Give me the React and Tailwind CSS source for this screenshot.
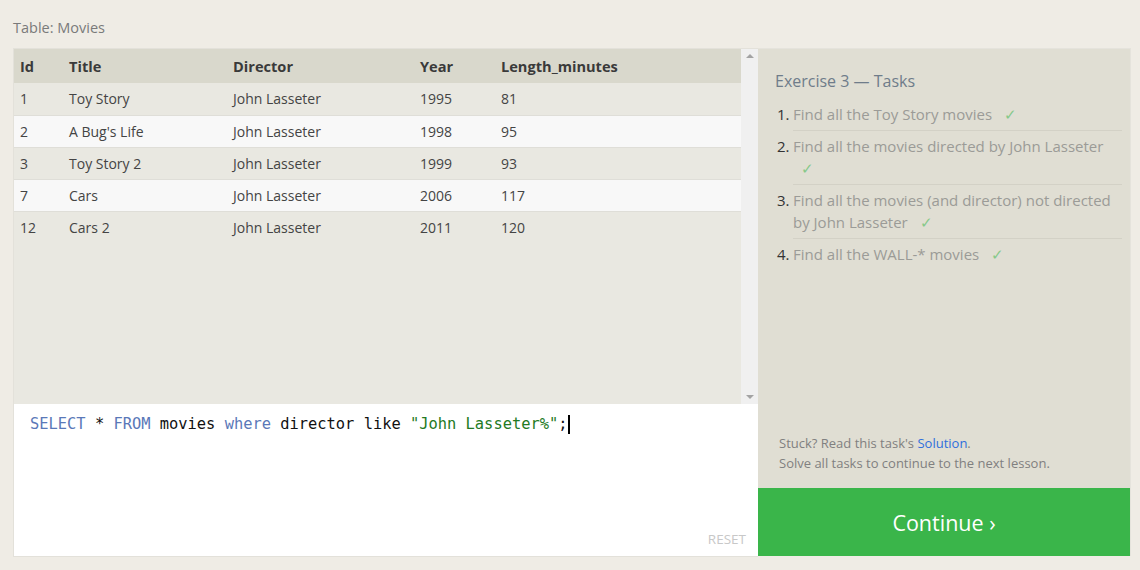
import React from "react";

const rows = [
  ["1", "Toy Story", "John Lasseter", "1995", "81"],
  ["2", "A Bug's Life", "John Lasseter", "1998", "95"],
  ["3", "Toy Story 2", "John Lasseter", "1999", "93"],
  ["7", "Cars", "John Lasseter", "2006", "117"],
  ["12", "Cars 2", "John Lasseter", "2011", "120"],
];

const Check = () => <span className="ml-3 leading-[20px] text-[#86c98a]">✓</span>;

export default function App() {
  return (
    <div
      className="w-[1140px] h-[570px] bg-[#efece5] pl-[13px] pt-[17px] text-[#444]"
      style={{ fontFamily: '"Open Sans", "Noto Sans", sans-serif' }}
    >
      <div className="text-[14.5px] leading-[22px] text-[#7a7a7a] h-[31px]">Table: Movies</div>
      <div className="flex w-[1118px]">
        {/* left */}
        <div className="w-[745px] flex flex-col border border-b-0 border-[#e3e1da] border-r-0">
          <div className="flex h-[355px] bg-[#e9e8e1]">
            <div className="flex-1">
              <table className="w-full text-[14px] border-collapse">
                <thead>
                  <tr className="bg-[#d9d8cc] h-[34px] text-left text-[14.6px] text-[#3a3a3a]">
                    <th className="pl-[6px] pt-[2px] w-[55px] font-bold">Id</th>
                    <th className="w-[164px] pt-[2px] font-bold">Title</th>
                    <th className="w-[187px] pt-[2px] font-bold">Director</th>
                    <th className="w-[81px] pt-[2px] font-bold">Year</th>
                    <th className="pt-[2px] font-bold">Length_minutes</th>
                  </tr>
                </thead>
                <tbody>
                  {rows.map((r, i) => (
                    <tr
                      key={i}
                      className={
                        (i % 2 === 1 ? "bg-[#f8f8f8]" : "bg-[#e9e8e1]") +
                        (i < rows.length - 1 ? " h-[32px] border-b border-[#dfded8]" : " h-[32px]")
                      }
                    >
                      <td className="pl-[6px]">{r[0]}</td>
                      <td>{r[1]}</td>
                      <td>{r[2]}</td>
                      <td>{r[3]}</td>
                      <td>{r[4]}</td>
                    </tr>
                  ))}
                </tbody>
              </table>
            </div>
            <div className="w-[17px] bg-[#f0f0f0] flex flex-col justify-between items-center py-[5px]">
              <div className="w-0 h-0 border-l-[4px] border-r-[4px] border-b-[4px] border-l-transparent border-r-transparent border-b-[#a3a3a3]" />
              <div className="w-0 h-0 border-l-[4px] border-r-[4px] border-t-[4px] border-l-transparent border-r-transparent border-t-[#a3a3a3]" />
            </div>
          </div>
          <div className="h-[153px] bg-white flex flex-col justify-between pl-[16px] pr-[12px] pt-[9px] pb-[8px] border-b border-[#e3e1da]">
            <div
              className="text-[15.4px] leading-[22px] text-[#111] flex items-center"
              style={{ fontFamily: '"DejaVu Sans Mono", monospace' }}
            >
              <span className="text-[#5a78b8]">SELECT</span>
              <span className="whitespace-pre"> * </span>
              <span className="text-[#5a78b8]">FROM</span>
              <span className="whitespace-pre"> movies </span>
              <span className="text-[#5a78b8]">where</span>
              <span className="whitespace-pre"> director like </span>
              <span className="text-[#237a23]">"John Lasseter%"</span>
              <span>;</span>
              <span className="inline-block w-[2px] h-[19px] bg-black" />
            </div>
            <div className="self-end text-[13.5px] leading-[18px] text-[#c8c8c8]">RESET</div>
          </div>
        </div>
        {/* right */}
        <div className="w-[373px] h-[508px] flex flex-col border-t border-r border-[#e5e3dc]">
          <div className="flex-1 bg-[#e0ded3] flex flex-col justify-between pl-[19px] pr-[8px] pt-[19px] pb-[15px]">
            <div>
              <div className="-ml-[2px] text-[16px] leading-[26px] text-[#6f7c8a] mb-[5px]">Exercise 3 — Tasks</div>
              <ol className="text-[15px] leading-[22px] text-[#9b9b97]">
                {[
                  <>Find all the Toy Story movies<Check /></>,
                  <>Find all the movies directed by John Lasseter<br /><span className="ml-[8px] leading-[20px] text-[#86c98a]">✓</span></>,
                  <>Find all the movies (and director) not directed by John Lasseter<Check /></>,
                  <>Find all the WALL-* movies<Check /></>,
                ].map((c, i) => (
                  <li key={i} className="flex">
                    <span className="w-[16px] text-[#333] shrink-0 pt-[4px]">{i + 1}.</span>
                    <div className={"flex-1 pt-[4px] pb-[5px]" + (i < 3 ? " border-b border-[#d3d1c6]" : "")}>{c}</div>
                  </li>
                ))}
              </ol>
            </div>
            <div className="text-[13px] leading-[20px] text-[#808080] pl-[2px]">
              <div>
                Stuck? Read this task's <span className="text-[#2f6fdc]">Solution</span>.
              </div>
              <div>Solve all tasks to continue to the next lesson.</div>
            </div>
          </div>
          <div className="h-[68px] bg-[#3ab54a] flex items-center justify-center pt-[3px] text-white text-[21.5px]">
            Continue ›
          </div>
        </div>
      </div>
    </div>
  );
}
